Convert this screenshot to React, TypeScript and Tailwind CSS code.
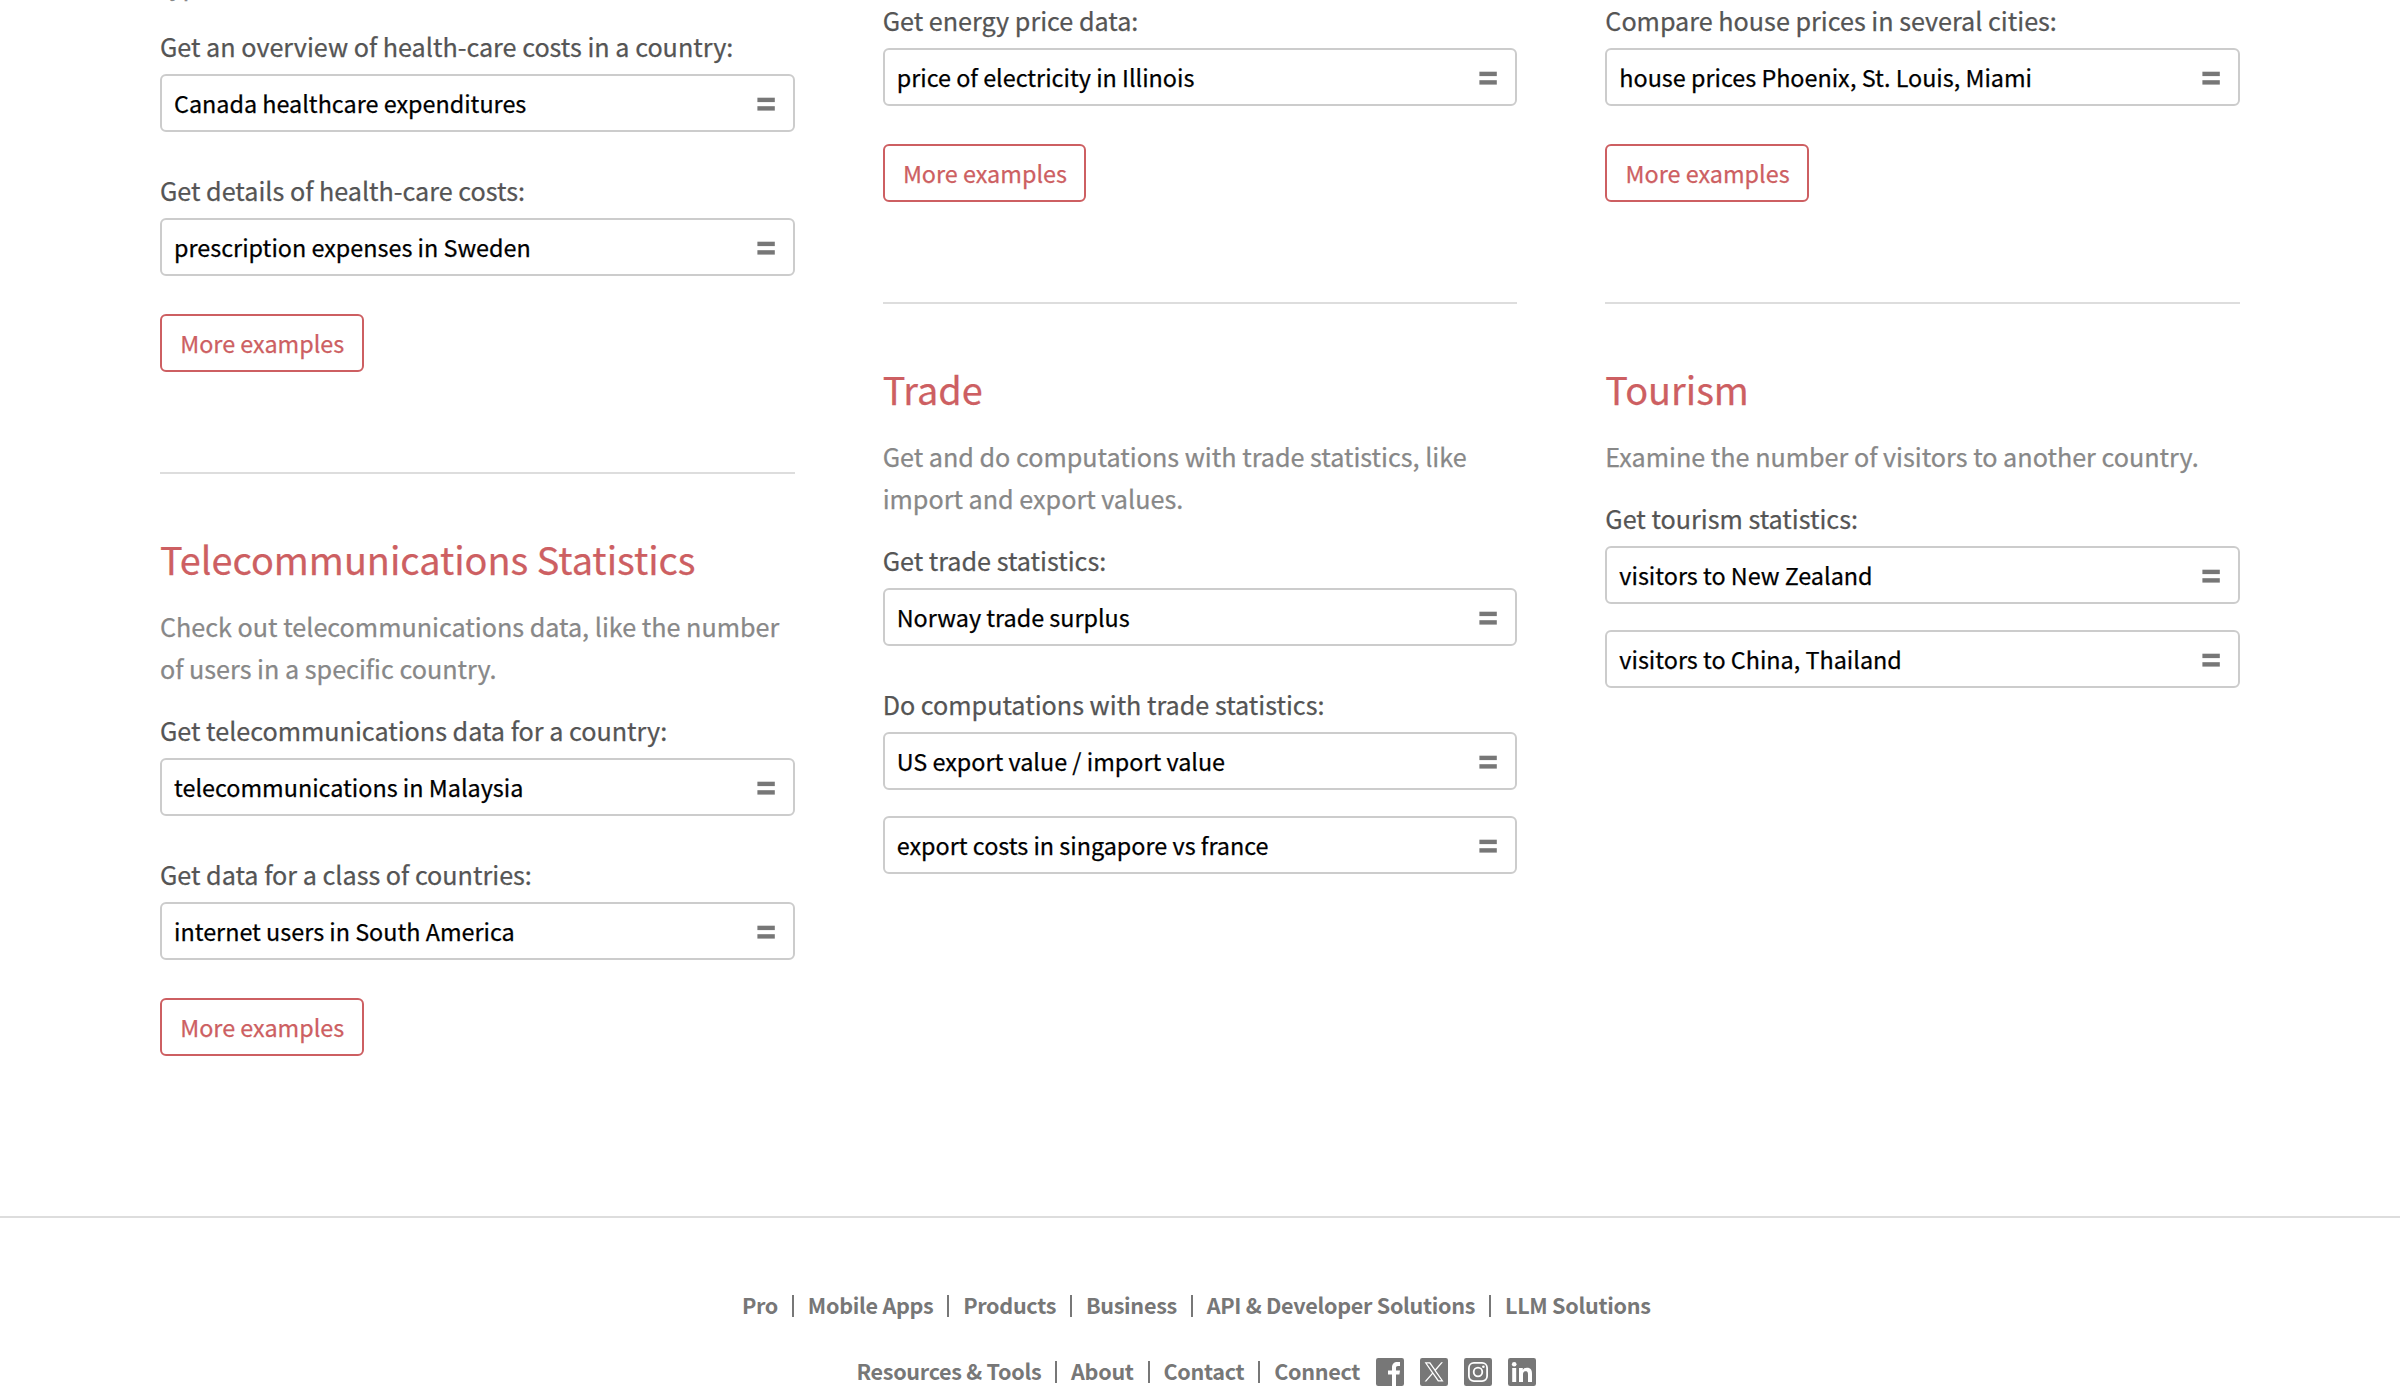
import { Fragment, type ReactNode } from "react";

type Example = { label: string; queries: string[] };

function Query({ text }: { text: string }) {
  return (
    <div className="flex h-[58px] items-center justify-between rounded-[6px] border-2 border-[#ccc] bg-white pl-3 pr-[18px]">
      <span className="whitespace-nowrap text-[23.36px] leading-[42px] text-black">{text}</span>
      <svg viewBox="0 0 18 14" className="mt-0.5 h-[14px] w-[18px] shrink-0" fill="#777">
        <rect x="0.4" y="0.7" width="17.4" height="4.4" />
        <rect x="0.4" y="9.2" width="17.4" height="4.4" />
      </svg>
    </div>
  );
}

function Examples({ items }: { items: Example[] }) {
  return (
    <div className="flex flex-col gap-[37px]">
      {items.map((item) => (
        <div key={item.label}>
          <p className="mb-[7px] whitespace-nowrap text-[25.16px] leading-[42px] text-[#555]">{item.label}</p>
          <div className="flex flex-col gap-[26px]">
            {item.queries.map((query) => (
              <Query key={query} text={query} />
            ))}
          </div>
        </div>
      ))}
    </div>
  );
}

function MoreExamples() {
  return (
    <button className="mt-[38px] flex h-[58px] w-[203.5px] justify-center rounded-[6px] border-2 border-[#cd5f62] pl-px text-[23.36px] leading-[54px] text-[#cd5f62]">
      More examples
    </button>
  );
}

function Topic({ title, lines, children }: { title: string; lines: string[]; children: ReactNode }) {
  return (
    <section className="mt-[100px] border-t-2 border-[#ddd] pt-[58px]">
      <h2 className="whitespace-nowrap text-[37.85px] leading-[54px] text-[#cd5f62]">{title}</h2>
      <p className="mb-5 mt-[19px] whitespace-nowrap text-[25.16px] leading-[42px] text-[#888]">
        {lines.map((line) => (
          <span key={line} className="block">
            {line}
          </span>
        ))}
      </p>
      {children}
    </section>
  );
}

function FooterRow({ links, children }: { links: string[]; children?: ReactNode }) {
  return (
    <div className="flex h-[30px] items-center justify-center pr-[7.5px]">
      {links.map((link, i) => (
        <Fragment key={link}>
          {i > 0 && <span className="mx-[13.9px] mt-0.5 h-[22px] w-0.5 bg-[#777]" />}
          <a className="whitespace-nowrap text-[21.57px] font-bold leading-[30px] tracking-[-0.29px] text-[#777]">{link}</a>
        </Fragment>
      ))}
      {children}
    </div>
  );
}

function Badge({ children }: { children: ReactNode }) {
  return (
    <svg viewBox="0 0 28 28" className="size-7 shrink-0">
      <rect width="28" height="28" rx="2.2" fill="#777" />
      {children}
    </svg>
  );
}

function SocialIcons() {
  return (
    <div className="ml-4 mt-0.5 flex gap-4">
      <Badge>
        <path
          fill="#fff"
          d="M16 28V16.6h-4v-4h4V9.6C16 6 18 4 21.4 4H24v3.9h-2.1c-1.3 0-1.9.7-1.9 1.9v2.8h4l-.6 4H20V28z"
        />
      </Badge>
      <Badge>
        <path
          fill="#fff"
          transform="translate(4.6 4.2) scale(.0158)"
          d="M714.163 519.284L1160.89 0H1055.03L667.137 450.887L357.328 0H0L468.492 681.821L0 1226.37H105.866L515.491 750.218L842.672 1226.37H1200L714.137 519.284H714.163ZM569.165 687.828L521.697 619.934L144.011 79.6944H306.615L611.412 515.685L658.88 583.579L1055.08 1150.3H892.476L569.165 687.854V687.828Z"
        />
      </Badge>
      <Badge>
        <rect x="4.9" y="4.9" width="18.2" height="18.2" rx="5" fill="none" stroke="#fff" strokeWidth="1.8" />
        <circle cx="14" cy="14" r="4.3" fill="none" stroke="#fff" strokeWidth="1.8" />
        <circle cx="19.4" cy="8.7" r="1.3" fill="#fff" />
      </Badge>
      <Badge>
        <circle cx="6.2" cy="6.3" r="2.3" fill="#fff" />
        <path
          fill="#fff"
          d="M4.2 10h4v14h-4zM11 10h3.8v1.9c.6-1.1 2-2.2 4.1-2.2 4.2 0 5.1 2.7 5.1 6.4V24h-4v-7c0-1.7 0-3.8-2.4-3.8S15 15 15 16.9V24h-4z"
        />
      </Badge>
    </div>
  );
}

export default function App() {
  return (
    <div className="h-[1398px] overflow-hidden bg-white font-['Noto_Sans_CJK_SC',sans-serif]">
      <main className="grid grid-cols-3 items-start gap-[88px] px-[160px] pb-[160px] [-webkit-text-stroke:0.25px]">
        <div className="-mt-[37px]">
          <p className="mb-5 text-[25.16px] leading-[42px] text-[#888]">type.</p>
          <Examples
            items={[
              { label: "Get an overview of health-care costs in a country:", queries: ["Canada healthcare expenditures"] },
              { label: "Get details of health-care costs:", queries: ["prescription expenses in Sweden"] },
            ]}
          />
          <MoreExamples />
          <Topic
            title="Telecommunications Statistics"
            lines={["Check out telecommunications data, like the number", "of users in a specific country."]}
          >
            <Examples
              items={[
                { label: "Get telecommunications data for a country:", queries: ["telecommunications in Malaysia"] },
                { label: "Get data for a class of countries:", queries: ["internet users in South America"] },
              ]}
            />
            <MoreExamples />
          </Topic>
        </div>

        <div className="-mt-px">
          <Examples items={[{ label: "Get energy price data:", queries: ["price of electricity in Illinois"] }]} />
          <MoreExamples />
          <Topic title="Trade" lines={["Get and do computations with trade statistics, like", "import and export values."]}>
            <Examples
              items={[
                { label: "Get trade statistics:", queries: ["Norway trade surplus"] },
                {
                  label: "Do computations with trade statistics:",
                  queries: ["US export value / import value", "export costs in singapore vs france"],
                },
              ]}
            />
          </Topic>
        </div>

        <div className="-mt-px">
          <Examples
            items={[{ label: "Compare house prices in several cities:", queries: ["house prices Phoenix, St. Louis, Miami"] }]}
          />
          <MoreExamples />
          <Topic title="Tourism" lines={["Examine the number of visitors to another country."]}>
            <Examples
              items={[
                { label: "Get tourism statistics:", queries: ["visitors to New Zealand", "visitors to China, Thailand"] },
              ]}
            />
          </Topic>
        </div>
      </main>

      <footer className="flex flex-col gap-9 border-t-2 border-[#ddd] pt-[72px]">
        <FooterRow
          links={["Pro", "Mobile Apps", "Products", "Business", "API & Developer Solutions", "LLM Solutions"]}
        />
        <FooterRow links={["Resources & Tools", "About", "Contact", "Connect"]}>
          <SocialIcons />
        </FooterRow>
      </footer>
    </div>
  );
}
